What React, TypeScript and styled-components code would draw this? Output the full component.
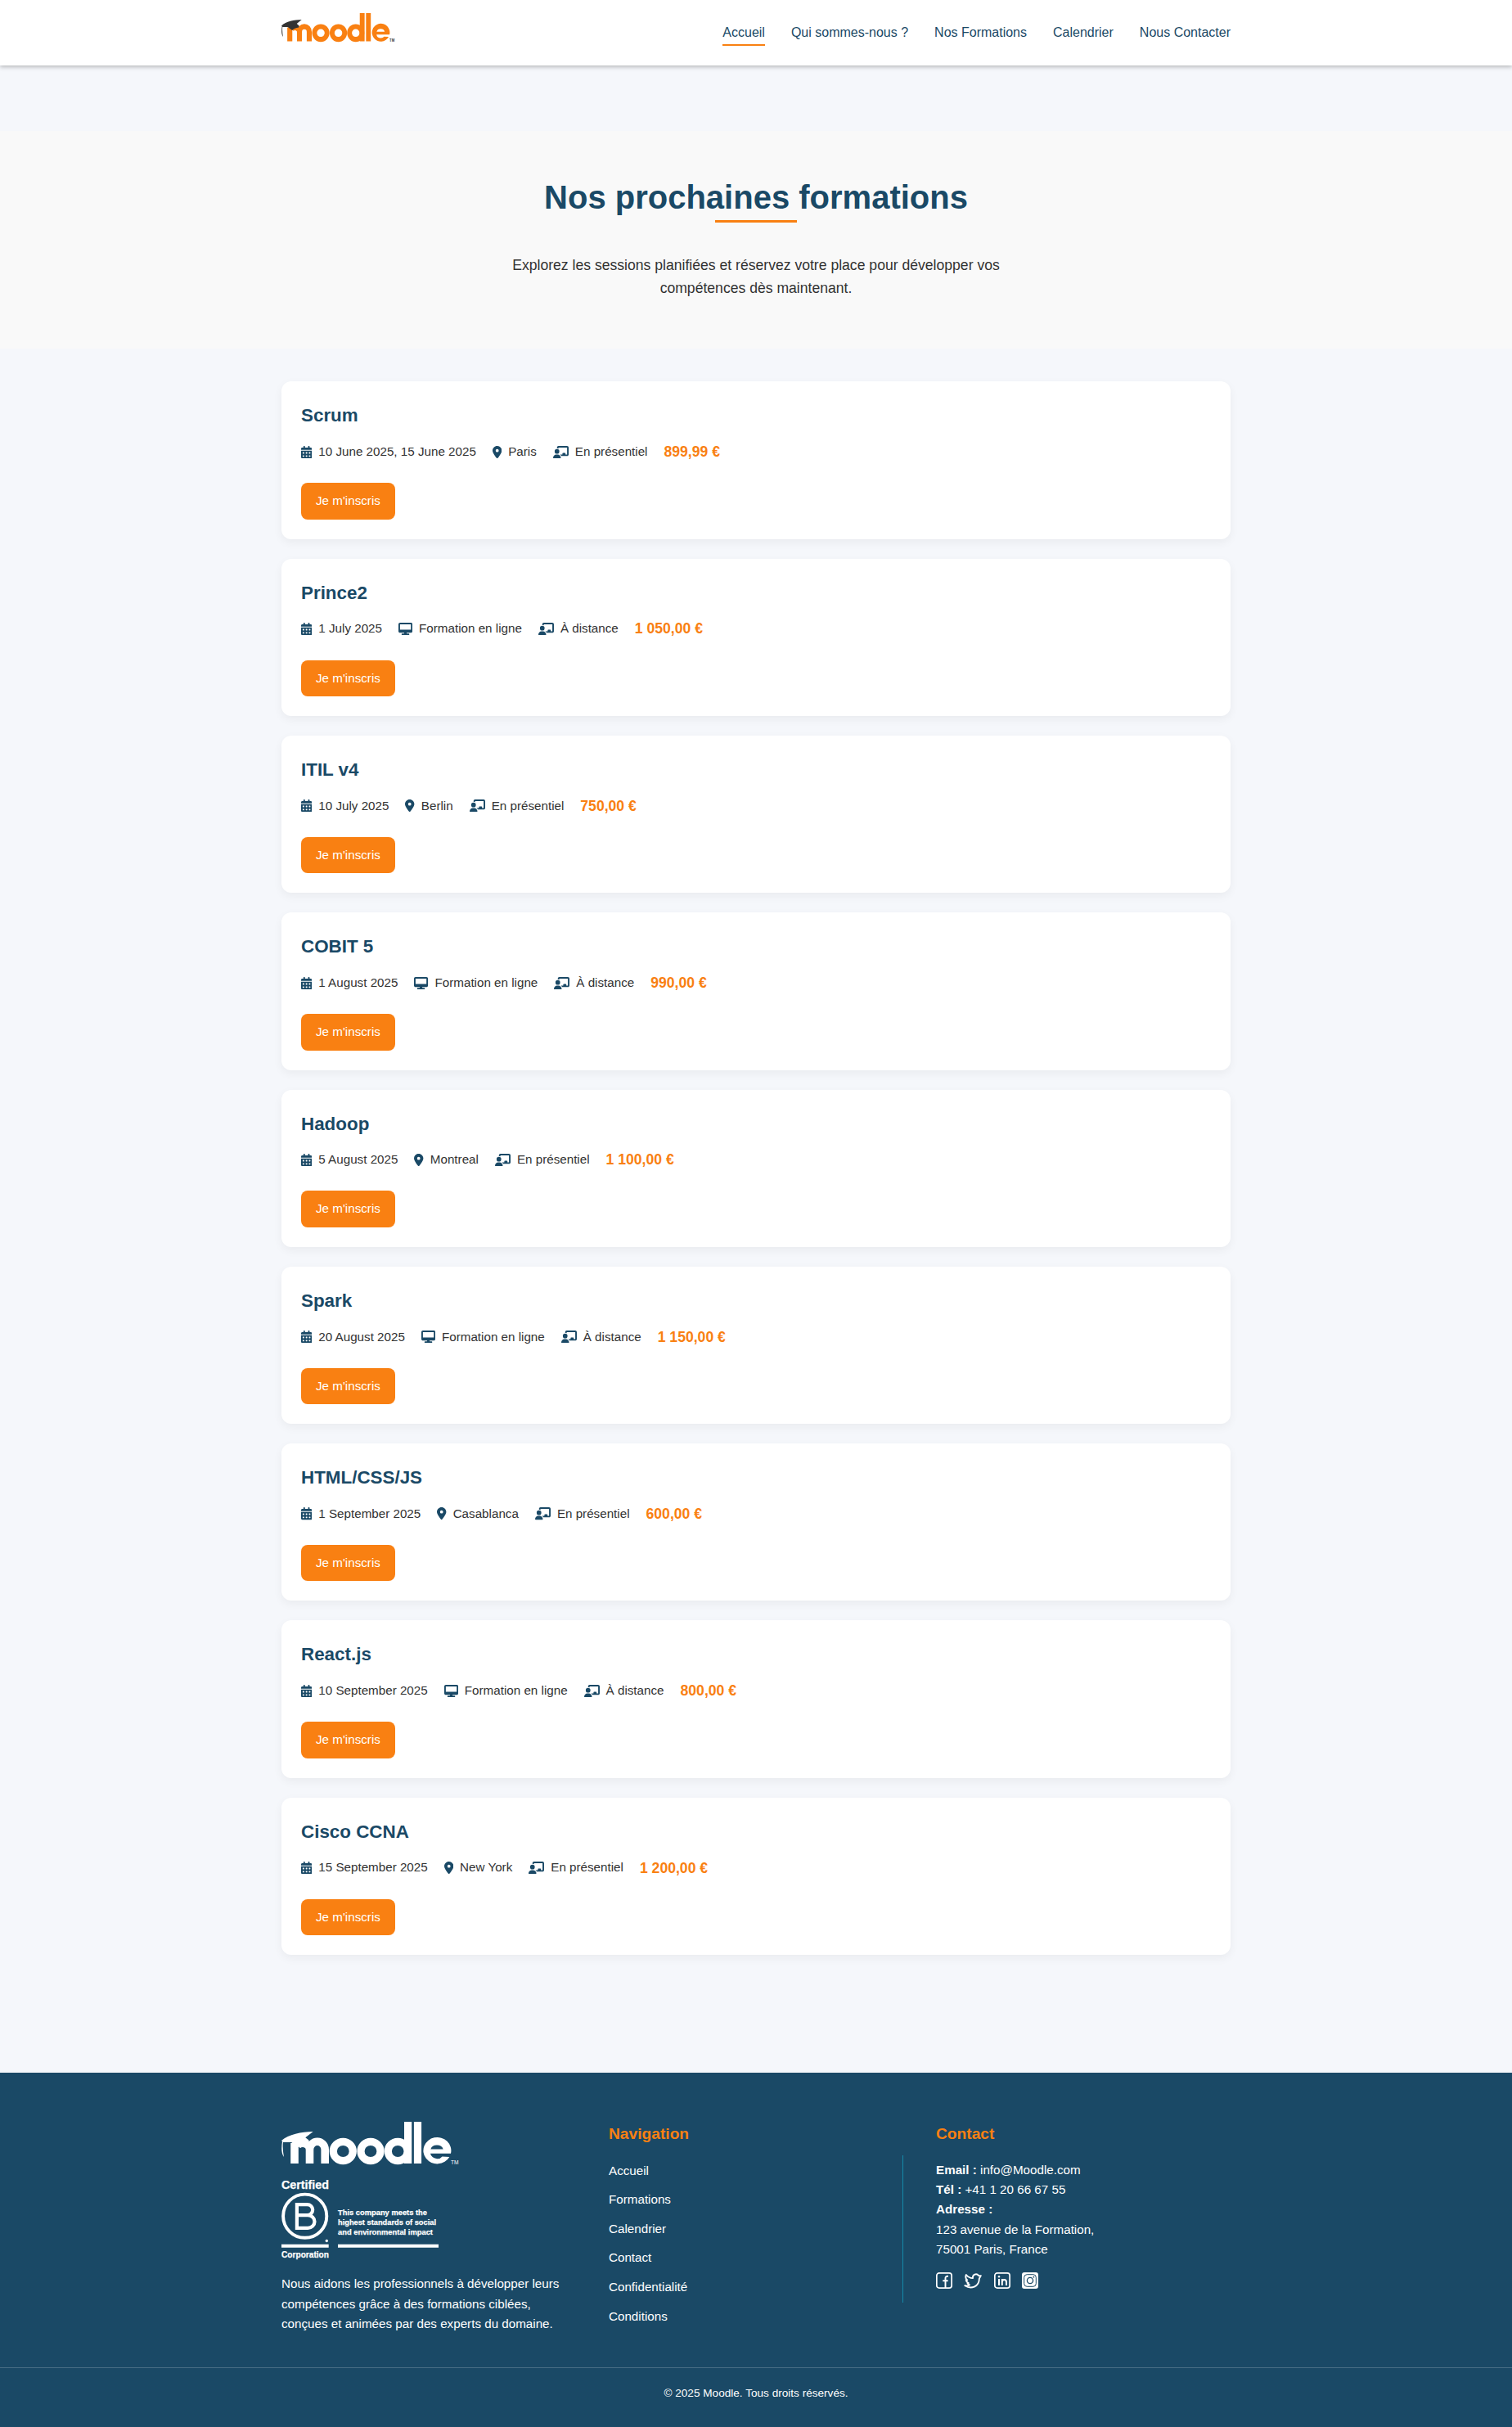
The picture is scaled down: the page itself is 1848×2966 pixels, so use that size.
import React from "react";
import styled, { createGlobalStyle } from "styled-components";
import { FaCalendarDays, FaLocationDot, FaChalkboardUser, FaDesktop } from "react-icons/fa6";

const navy = "#1a4966";
const orange = "#f98012";

const GlobalStyle = createGlobalStyle`
  * { box-sizing: border-box; margin: 0; padding: 0; }
  body {
    margin: 0;
    background: #f5f7fb;
    color: #333;
    font-family: "Liberation Sans", Arial, sans-serif;
    font-size: 16px;
    line-height: 1.6;
  }
  ul { list-style: none; }
  a { color: inherit; text-decoration: none; }
`;

const Container = styled.div`
  width: 100%;
  max-width: 1200px;
  margin: 0 auto;
  padding: 0 20px;
`;

const Header = styled.header`
  height: 80px;
  background: #fff;
  box-shadow: 0 2px 5px rgba(0, 0, 0, 0.25);
`;

const HeaderRow = styled(Container)`
  display: flex;
  align-items: center;
  justify-content: space-between;
  height: 80px;
`;

const HeaderLogo = styled.a`
  align-self: flex-start;
  margin-top: 16px;
  svg { display: block; }
`;

const NavList = styled.ul`
  display: flex;
  align-items: center;
  gap: 32px;
`;

const NavItem = styled.li<{ $active?: boolean }>`
  position: relative;
  color: ${navy};
  &::after {
    content: "";
    display: ${(p) => (p.$active ? "block" : "none")};
    position: absolute;
    left: 0;
    bottom: -3px;
    width: 100%;
    height: 2px;
    background: ${orange};
  }
`;

const Hero = styled.section`
  height: 266.320px;
  margin-top: 80px;
  padding: 49px 20px 0;
  background: #f9f9f9;
  text-align: center;
`;

const HeroTitle = styled.h1`
  color: ${navy};
  font-size: 40px;
  font-weight: 700;
  line-height: 64px;
  &::after {
    content: "";
    display: block;
    width: 100px;
    height: 3px;
    margin: -4px auto 0;
    background: ${orange};
  }
`;

const HeroText = styled.p`
  max-width: 600px;
  margin: 38px auto 0;
  font-size: 17.6px;
`;

const Sessions = styled(Container)`
  display: flex;
  flex-direction: column;
  gap: 24px;
  padding-top: 40px;
  padding-bottom: 144px;
`;

const Card = styled.article`
  display: flex;
  flex-direction: column;
  align-items: flex-start;
  padding: 24px;
  border-radius: 12px;
  background: #fff;
  box-shadow: 0 4px 12px rgba(0, 0, 0, 0.05);
`;

const CardTitle = styled.h3`
  margin-bottom: 12px;
  color: ${navy};
  font-size: 22.4px;
`;

const Meta = styled.div`
  display: flex;
  align-items: center;
  gap: 20px;
  margin-bottom: 24px;
  font-size: 15.2px;
`;

const MetaItem = styled.span<{ $iconWidth: number }>`
  display: flex;
  align-items: center;
  gap: 8px;
  svg {
    width: ${(p) => p.$iconWidth}em;
    height: 1em;
    color: ${navy};
  }
`;

const Price = styled.strong`
  color: ${orange};
  font-size: 17.6px;
`;

const Enroll = styled.a`
  padding: 10px 18px;
  border-radius: 8px;
  background: ${orange};
  color: #fff;
  font-size: 15.2px;
`;

const Footer = styled.footer`
  background: ${navy};
  color: #fff;
  font-size: 15.2px;
`;

const FooterGrid = styled(Container)`
  display: grid;
  grid-template-columns: repeat(3, 360px);
  gap: 40px;
  height: 360px;
  padding-top: 60px;
`;

const FooterText = styled.p`
  margin-top: 12.300px;
`;

const FooterLogo = styled.div`
  height: 54px;
  svg { display: block; }
`;

const Certificate = styled.div`
  height: 116px;
  margin-top: 4px;
  svg { display: block; }
`;

const FooterHeading = styled.h4`
  margin-bottom: 16px;
  color: ${orange};
  font-size: 19.2px;
  line-height: 30.7px;
`;

const FooterLinks = styled.ul`
  display: flex;
  flex-direction: column;
  gap: 10px;
  li { height: 25.6px; line-height: 25.6px; }
`;

const NavColumn = styled.div`
  position: relative;
  &::after {
    content: "";
    position: absolute;
    right: 0;
    top: 41px;
    width: 1px;
    height: 180px;
    background: #158aa9;
  }
`;

const Socials = styled.div`
  display: flex;
  gap: 14px;
  margin-top: 16px;
`;

const Copyright = styled.div`
  padding: 20px 20px 30px;
  border-top: 1px solid rgba(255, 255, 255, 0.2);
  text-align: center;
  font-size: 13.6px;
`;

interface LogoProps {
  width: number;
  height: number;
  word: string;
  cap: string;
  markWeight?: number;
}

/* The word mark; the mortarboard and the trademark sign can take a colour of their own. */
const MoodleLogo = ({ width, height, word, cap, markWeight = 400 }: LogoProps) => (
  <svg width={width} height={height} viewBox="0 0 217 54" preserveAspectRatio="none" role="img" aria-label="Moodle">
    <path
      d="M16 51V26M34.500 51V33.900a8.500 7.500 0 0 0-15 -5M53.200 51V33.900a9.300 9.600 0 0 0-18.700 0"
      fill="none"
      stroke={word}
      strokeWidth="9.600"
    />
    <path d="M154.600 0V51M166.500 0V51" fill="none" stroke={word} strokeWidth="9.200" />
    <g fill="none" stroke={word} strokeWidth="9.200">
      <ellipse cx="75.300" cy="36" rx="12" ry="11.600" />
      <ellipse cx="109" cy="36" rx="12" ry="11.600" />
      <ellipse cx="142.200" cy="36" rx="11.900" ry="11.600" />
    </g>
    <path
      fill={word}
      fillRule="evenodd"
      d="M207 38.700A17 16.200 0 1 0 205.300 43L196.500 42.500Q194.500 45.200 190.500 45.200A8.500 7.500 0 0 1 182 38.700ZM182.300 33.500A8 7 0 0 1 197.700 33.500Z"
    />
    <path
      d="M0 23C9 15 24 12.500 38.700 12L29.300 19.300 33.500 22.500 33 26C28 26.500 23 29 20.500 31L12 25 2 25C1.200 31 2 37 3 43-.5 38 0 31 1 24Z"
      fill={cap}
    />
    <text x="207" y="52" fontSize="6.600" fontWeight={markWeight} fontFamily="Liberation Sans" fill={cap}>TM</text>
  </svg>
);

const BCorp = () => (
  <svg width="220" height="116" viewBox="0 0 220 116" fill="#fff" fontFamily="Liberation Sans" role="img">
    <g fontWeight="700" stroke="#fff" strokeWidth=".25">
      <text x="0" y="23.700" fontSize="14.300" textLength="58" lengthAdjust="spacingAndGlyphs">Certified</text>
      <text x="0" y="108" fontSize="10.600" textLength="58" lengthAdjust="spacingAndGlyphs">Corporation</text>
      <text x="69" y="55.700" fontSize="9.600" textLength="109" lengthAdjust="spacingAndGlyphs">This company meets the</text>
      <text x="69" y="68" fontSize="9.600" textLength="120" lengthAdjust="spacingAndGlyphs">highest standards of social</text>
      <text x="69" y="80.300" fontSize="9.600" textLength="116" lengthAdjust="spacingAndGlyphs">and environmental impact</text>
    </g>
    <circle cx="28.700" cy="57.200" r="26.600" fill="none" stroke="#fff" strokeWidth="3.900" />
    <path fill="none" stroke="#fff" strokeWidth="4.200" d="M18.900 43.100H31.500a6.700 6.500 0 0 1 0 13H18.900M31.500 56.100h.8a8.200 7.900 0 0 1 0 15.800H18.900V41" />
    <circle cx="55.300" cy="87.500" r="1.700" />
    <path d="M0 91.700h57.700v4H0zM69 91.700h123v4H69z" />
  </svg>
);

const Facebook = () => (
  <svg width="20" height="20" viewBox="0 0 20 20" fill="none" stroke="#fff" strokeWidth="1.700">
    <rect x=".85" y=".85" width="18.300" height="18.300" rx="3" />
    <path d="M15 4.700h-1.200a2.300 2.300 0 0 0-2.300 2.300v12M8.300 10.300h6.300" strokeWidth="1.900" />
  </svg>
);

const Twitter = () => (
  <svg width="23" height="20" viewBox="0 0 23 20" fill="none" stroke="#fff" strokeWidth="1.900" strokeLinejoin="round">
    <path d="M20.800 4.100h-2.700C17 2.500 15 2 13.300 2.700 11.500 3.500 10.700 5.200 11 7.100 7.500 7.200 5 5.500 2.900 3 1.800 5.500 2.300 7.900 4.200 9.500L2.700 9.300c.2 1.900 1.400 3 3 3.700l-1.200.3c.5 1 1.400 1.800 2.500 2.200-1.700.9-3.700 1.100-5.700.8C8.500 20.800 18.600 18.500 18.900 7.500Z" />
  </svg>
);

const LinkedIn = () => (
  <svg width="20" height="20" viewBox="0 0 20 20" fill="none" stroke="#fff" strokeWidth="1.700">
    <rect x=".85" y=".85" width="18.300" height="18.300" rx="3" />
    <path d="M6 8v8M9.800 16V8M9.800 12c0-4 5.200-4 5.200 0v4" strokeWidth="2" />
    <circle cx="6" cy="5.200" r="1.200" fill="#fff" stroke="none" />
  </svg>
);

const Instagram = () => (
  <svg width="20" height="20" viewBox="0 0 20 20" fill="none" stroke={navy}>
    <rect width="20" height="20" rx="3" fill="#fff" stroke="none" />
    <rect x="2.700" y="2.700" width="14.600" height="14.600" rx="3.500" />
    <circle cx="10" cy="10" r="3.600" strokeWidth="1.300" />
    <circle cx="14.400" cy="5.700" r=".9" fill={navy} stroke="none" />
  </svg>
);

const menu = ["Accueil", "Qui sommes-nous ?", "Nos Formations", "Calendrier", "Nous Contacter"];
const footerMenu = ["Accueil", "Formations", "Calendrier", "Contact", "Confidentialité", "Conditions"];

/* A session without a city takes place online. */
const sessions: { title: string; date: string; city?: string; price: string }[] = [
  { title: "Scrum", date: "10 June 2025, 15 June 2025", city: "Paris", price: "899,99 €" },
  { title: "Prince2", date: "1 July 2025", price: "1 050,00 €" },
  { title: "ITIL v4", date: "10 July 2025", city: "Berlin", price: "750,00 €" },
  { title: "COBIT 5", date: "1 August 2025", price: "990,00 €" },
  { title: "Hadoop", date: "5 August 2025", city: "Montreal", price: "1 100,00 €" },
  { title: "Spark", date: "20 August 2025", price: "1 150,00 €" },
  { title: "HTML/CSS/JS", date: "1 September 2025", city: "Casablanca", price: "600,00 €" },
  { title: "React.js", date: "10 September 2025", price: "800,00 €" },
  { title: "Cisco CCNA", date: "15 September 2025", city: "New York", price: "1 200,00 €" },
];

export default function App() {
  return (
    <>
      <GlobalStyle />
      <Header>
        <HeaderRow>
          <HeaderLogo href="#"><MoodleLogo width={138.5} height={36.5} word={orange} cap="#333" markWeight={700} /></HeaderLogo>
          <nav>
            <NavList>
              {menu.map((label, i) => (
                <NavItem key={label} $active={i === 0}><a href="#">{label}</a></NavItem>
              ))}
            </NavList>
          </nav>
        </HeaderRow>
      </Header>
      <main>
        <Hero>
          <HeroTitle>Nos prochaines formations</HeroTitle>
          <HeroText>Explorez les sessions planifiées et réservez votre place pour développer vos compétences dès maintenant.</HeroText>
        </Hero>
        <Sessions>
          {sessions.map((s) => (
            <Card key={s.title}>
              <CardTitle>{s.title}</CardTitle>
              <Meta>
                <MetaItem $iconWidth={0.875}><FaCalendarDays />{s.date}</MetaItem>
                {s.city
                  ? <MetaItem $iconWidth={0.75}><FaLocationDot />{s.city}</MetaItem>
                  : <MetaItem $iconWidth={1.125}><FaDesktop />Formation en ligne</MetaItem>}
                <MetaItem $iconWidth={1.25}><FaChalkboardUser />{s.city ? "En présentiel" : "À distance"}</MetaItem>
                <Price>{s.price}</Price>
              </Meta>
              <Enroll href="#">Je m'inscris</Enroll>
            </Card>
          ))}
        </Sessions>
      </main>
      <Footer>
        <FooterGrid>
          <div>
            <FooterLogo><MoodleLogo width={217} height={54} word="#fff" cap="#fff" /></FooterLogo>
            <Certificate><BCorp /></Certificate>
            <FooterText>Nous aidons les professionnels à développer leurs compétences grâce à des formations ciblées, conçues et animées par des experts du domaine.</FooterText>
          </div>
          <NavColumn>
            <FooterHeading>Navigation</FooterHeading>
            <FooterLinks>
              {footerMenu.map((label) => <li key={label}><a href="#">{label}</a></li>)}
            </FooterLinks>
          </NavColumn>
          <div>
            <FooterHeading>Contact</FooterHeading>
            <p><strong>Email :</strong> info@Moodle.com</p>
            <p><strong>Tél :</strong> +41 1 20 66 67 55</p>
            <p><strong>Adresse :</strong><br />123 avenue de la Formation,<br />75001 Paris, France</p>
            <Socials><Facebook /><Twitter /><LinkedIn /><Instagram /></Socials>
          </div>
        </FooterGrid>
        <Copyright>© 2025 Moodle. Tous droits réservés.</Copyright>
      </Footer>
    </>
  );
}
